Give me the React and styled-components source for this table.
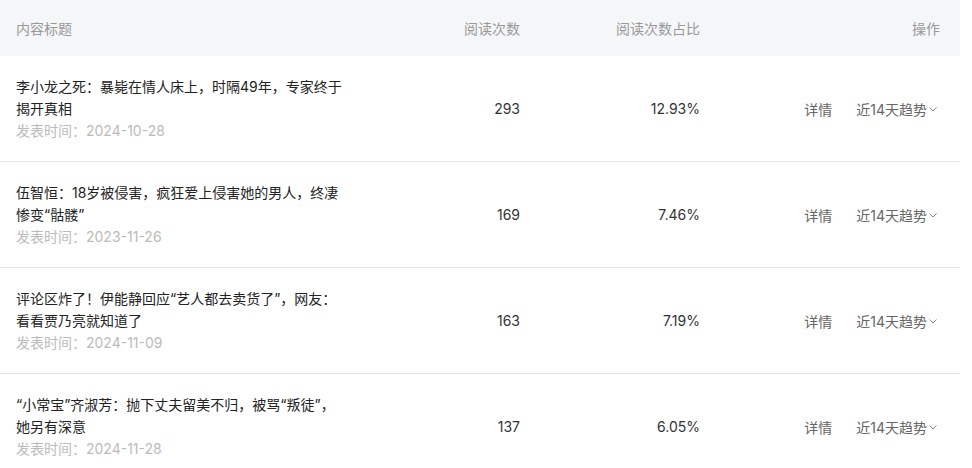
import React from "react";
import styled, { createGlobalStyle } from "styled-components";

const rows = [
  {
    title: ["李小龙之死：暴毙在情人床上，时隔49年，专家终于", "揭开真相"],
    date: "2024-10-28",
    reads: 293,
    ratio: "12.93%",
  },
  {
    title: ["伍智恒：18岁被侵害，疯狂爱上侵害她的男人，终凄", "惨变“骷髅”"],
    date: "2023-11-26",
    reads: 169,
    ratio: "7.46%",
  },
  {
    title: ["评论区炸了！伊能静回应“艺人都去卖货了”，网友：", "看看贾乃亮就知道了"],
    date: "2024-11-09",
    reads: 163,
    ratio: "7.19%",
  },
  {
    title: ["“小常宝”齐淑芳：抛下丈夫留美不归，被骂“叛徒”，", "她另有深意"],
    date: "2024-11-28",
    reads: 137,
    ratio: "6.05%",
  },
];

const Chevron = () => (
  <svg width="10" height="10" viewBox="0 0 10 10" fill="none">
    <path d="M1.5 3.5 L5 7 L8.5 3.5" stroke="#888" strokeWidth="1" />
  </svg>
);

const App = () => {
  return (
    <>
      <GlobalStyle />
      <Table>
        <HeadRow>
          <HeadCell>内容标题</HeadCell>
          <HeadCell right>阅读次数</HeadCell>
          <HeadCell right>阅读次数占比</HeadCell>
          <HeadCell right>操作</HeadCell>
        </HeadRow>
        {rows.map((r, i) => (
          <Row key={i}>
            <TitleCell>
              {r.title.map((line, j) => (
                <TitleLine key={j}>{line}</TitleLine>
              ))}
              <DateLine>发表时间：{r.date}</DateLine>
            </TitleCell>
            <NumCell>{r.reads}</NumCell>
            <NumCell>{r.ratio}</NumCell>
            <Actions>
              <ActionLink>详情</ActionLink>
              <ActionLink>
                近14天趋势
                <Chevron />
              </ActionLink>
            </Actions>
          </Row>
        ))}
      </Table>
    </>
  );
};

export default App;

const GlobalStyle = createGlobalStyle`
  body {
    margin: 0;
    background: #fff;
    font-family: Inter, "Noto Sans CJK SC", sans-serif;
  }
`;

const Table = styled.div`
  width: 960px;
  font-size: 14px;
`;

const grid = `
  display: grid;
  grid-template-columns: 384px 120px 180px 240px;
  padding: 0 20px 0 16px;
  align-items: center;
`;

const HeadRow = styled.div`
  ${grid}
  height: 56px;
  background: #f5f6f7;
  color: #999;
`;

const HeadCell = styled.div`
  text-align: ${(props) => (props.right ? "right" : "left")};
`;

const Row = styled.div`
  ${grid}
  height: 106px;
  border-bottom: 1px solid #e6e6e6;
  box-sizing: border-box;
  color: #222;
`;

const TitleCell = styled.div`
  display: flex;
  flex-direction: column;
  line-height: 22px;
`;

const TitleLine = styled.div`
  white-space: nowrap;
`;

const DateLine = styled.div`
  color: #bbb;
`;

const NumCell = styled.div`
  text-align: right;
  color: #333;
`;

const Actions = styled.div`
  display: flex;
  justify-content: flex-end;
  align-items: center;
  gap: 24px;
  padding-right: 2px;
  color: #666;
`;

const ActionLink = styled.span`
  display: inline-flex;
  align-items: center;
  gap: 1px;
  cursor: pointer;
`;
